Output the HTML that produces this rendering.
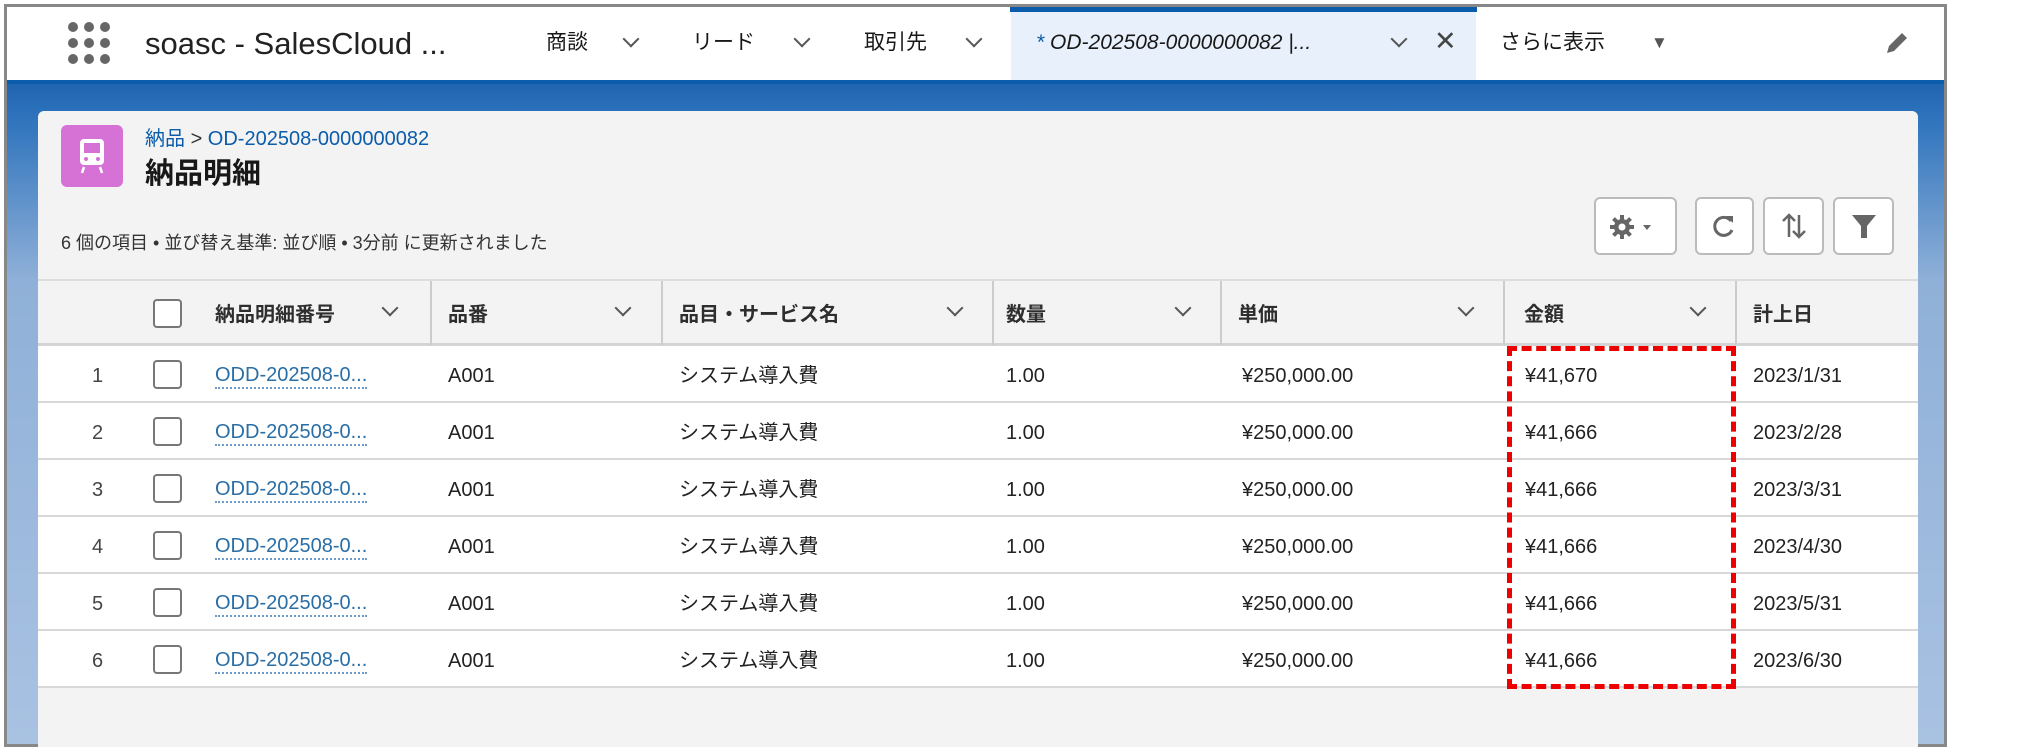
<!DOCTYPE html>
<html><head><meta charset="utf-8"><style>
*{margin:0;padding:0;box-sizing:border-box}
body{width:2027px;height:753px;background:#fff;position:relative;overflow:hidden;font-family:"Liberation Sans","Noto Sans CJK JP",sans-serif;color:#181818}
.a{position:absolute}
.t{position:absolute;white-space:nowrap;line-height:26px}
.hdr{font-weight:bold;font-size:20px;color:#2e2e2e}
.cell{font-size:20px;color:#222}
.chev{position:absolute;width:12px;height:12px;border-right:2px solid #555;border-bottom:2px solid #555;transform:rotate(45deg)}
.cb{position:absolute;width:29px;height:29px;border:2px solid #777;border-radius:4px;background:#fff}
.btn{position:absolute;border:2px solid #bbb;border-radius:6px;background:#fff;top:197px;height:58px}
</style></head><body>
<div class="a" style="left:4px;top:4px;width:1943px;height:743px;border:3px solid #888;background:#fff"></div>
<div class="a" style="left:7px;top:7px;width:1937px;height:73px;background:#fff"></div>
<svg class="a" style="left:66px;top:20px" width="46" height="46">
<g fill="#666"><circle cx="7" cy="7" r="5"/><circle cx="23" cy="7" r="5"/><circle cx="39" cy="7" r="5"/><circle cx="7" cy="23" r="5"/><circle cx="23" cy="23" r="5"/><circle cx="39" cy="23" r="5"/><circle cx="7" cy="39" r="5"/><circle cx="23" cy="39" r="5"/><circle cx="39" cy="39" r="5"/></g></svg>
<div class="t" style="left:145px;top:27px;font-size:31px;line-height:34px;color:#222">soasc - SalesCloud ...</div>
<div class="t" style="left:546px;top:30px;font-size:21px">商談</div><div class="chev" style="left:625px;top:33px"></div>
<div class="t" style="left:692px;top:30px;font-size:21px">リード</div><div class="chev" style="left:796px;top:33px"></div>
<div class="t" style="left:864px;top:30px;font-size:21px">取引先</div><div class="chev" style="left:968px;top:33px"></div>
<div class="a" style="left:1011px;top:7px;width:465px;height:73px;background:#e8f1fb"></div>
<div class="a" style="left:1010px;top:7px;width:467px;height:5px;background:#0b5cab"></div>
<div class="t" style="left:1036px;top:30px;font-size:21px;font-style:italic"><span style="color:#0b5cab">*</span> OD-202508-0000000082 |...</div>
<div class="chev" style="left:1393px;top:33px"></div>
<div class="t" style="left:1434px;top:28px;font-size:27px;color:#444">✕</div>
<div class="t" style="left:1500px;top:30px;font-size:21px">さらに表示</div>
<div class="t" style="left:1651px;top:30px;font-size:17px;color:#555">▼</div>
<svg class="a" style="left:1884px;top:30px" width="26" height="26"><path d="M3 23 L5 16 L18 3 L23 8 L10 21 Z" fill="#666"/></svg>
<div class="a" style="left:7px;top:80px;width:1937px;height:664px;background:linear-gradient(180deg,#1f63b0 0,#2f74bd 40px,#8fb0d8 200px,#a9c2e2 664px)"></div>
<div class="a" style="left:7px;top:80px;width:1937px;height:4px;background:#0b5cab"></div>
<div class="a" style="left:38px;top:111px;width:1880px;height:636px;background:#f3f3f3;border-radius:6px 6px 0 0"></div>
<div class="a" style="left:61px;top:125px;width:62px;height:62px;background:#d672d5;border-radius:6px"></div>
<svg class="a" style="left:74px;top:137px" width="36" height="40"><rect x="6" y="2" width="24" height="26" rx="4" fill="#fff"/><rect x="10" y="6" width="16" height="10" fill="#d672d5"/><circle cx="12" cy="22" r="2" fill="#d672d5"/><circle cx="24" cy="22" r="2" fill="#d672d5"/><path d="M10 30 L8 36 M26 30 L28 36" stroke="#fff" stroke-width="2.5"/></svg>
<div class="t" style="left:145px;top:126px;font-size:20px;color:#0b5cab">納品 <span style="color:#333">&gt;</span> OD-202508-0000000082</div>
<div class="t" style="left:145px;top:157px;font-size:29px;line-height:34px;font-weight:bold">納品明細</div>
<div class="t" style="left:61px;top:230px;font-size:18px;color:#333">6 個の項目 • 並び替え基準: 並び順 • 3分前 に更新されました</div>
<div class="btn" style="left:1594px;width:83px"></div>
<svg class="a" style="left:1609px;top:214px" width="54" height="26"><g transform="translate(13,13)" fill="#666"><circle r="8"/><g stroke="#666" stroke-width="4"><path d="M0 -12V12M-12 0H12M-8.5 -8.5L8.5 8.5M-8.5 8.5L8.5 -8.5"/></g><circle r="3.5" fill="#fff"/></g><path d="M34 11 L42 11 L38 16Z" fill="#666"/></svg>
<div class="btn" style="left:1695px;width:59px"></div>
<svg class="a" style="left:1711px;top:212px" width="28" height="28"><path d="M20 9 A9 9 0 1 0 21 18" fill="none" stroke="#666" stroke-width="3"/><path d="M15 4 L22 4 L22 11Z" fill="#666"/></svg>
<div class="btn" style="left:1763px;width:61px"></div>
<svg class="a" style="left:1780px;top:211px" width="28" height="30"><path d="M9 26 V4 M3 10 L9 4 L15 10 M19 4 V26 M13 20 L19 26 L25 20" fill="none" stroke="#666" stroke-width="2.5"/></svg>
<div class="btn" style="left:1833px;width:61px"></div>
<svg class="a" style="left:1850px;top:212px" width="28" height="28"><path d="M2 3 H26 L17 14 V26 L11 26 V14Z" fill="#666"/></svg>
<div class="a" style="left:38px;top:279px;width:1880px;height:67px;background:#f3f3f3;border-top:2px solid #ddd;border-bottom:3px solid #d4d4d4"></div>
<div class="a" style="left:38px;top:346px;width:1880px;height:342px;background:#fff"></div>
<div class="a" style="left:430px;top:281px;width:2px;height:64px;background:#ccc"></div>
<div class="a" style="left:661px;top:281px;width:2px;height:64px;background:#ccc"></div>
<div class="a" style="left:992px;top:281px;width:2px;height:64px;background:#ccc"></div>
<div class="a" style="left:1220px;top:281px;width:2px;height:64px;background:#ccc"></div>
<div class="a" style="left:1503px;top:281px;width:2px;height:64px;background:#ccc"></div>
<div class="a" style="left:1735px;top:281px;width:2px;height:64px;background:#ccc"></div>
<div class="cb" style="left:153px;top:299px"></div>
<div class="t hdr" style="left:215px;top:302px">納品明細番号</div><div class="chev" style="left:384px;top:302px"></div>
<div class="t hdr" style="left:448px;top:302px">品番</div><div class="chev" style="left:617px;top:302px"></div>
<div class="t hdr" style="left:679px;top:302px">品目・サービス名</div><div class="chev" style="left:949px;top:302px"></div>
<div class="t hdr" style="left:1006px;top:302px">数量</div><div class="chev" style="left:1177px;top:302px"></div>
<div class="t hdr" style="left:1238px;top:302px">単価</div><div class="chev" style="left:1460px;top:302px"></div>
<div class="t hdr" style="left:1524px;top:302px">金額</div><div class="chev" style="left:1692px;top:302px"></div>
<div class="t hdr" style="left:1753px;top:302px">計上日</div>
<div id="rows"></div>
<script>
var d=["2023/1/31","2023/2/28","2023/3/31","2023/4/30","2023/5/31","2023/6/30"],h="";
for(var i=0;i<6;i++){var y=346+57*i;
h+='<div class="a" style="left:38px;top:'+(y+55)+'px;width:1880px;height:2px;background:#d8d8d8"></div>';
var ty=y+17;
h+='<div class="t cell" style="left:92px;top:'+ty+'px;color:#444">'+(i+1)+'</div>';
h+='<div class="cb" style="left:153px;top:'+(y+14)+'px"></div>';
h+='<div class="t cell" style="left:215px;top:'+ty+'px;color:#2a6ea6;border-bottom:2px dotted #6b9bc8;line-height:24px">ODD-202508-0...</div>';
h+='<div class="t cell" style="left:448px;top:'+ty+'px">A001</div>';
h+='<div class="t cell" style="left:679px;top:'+ty+'px">システム導入費</div>';
h+='<div class="t cell" style="left:1006px;top:'+ty+'px">1.00</div>';
h+='<div class="t cell" style="left:1242px;top:'+ty+'px">¥250,000.00</div>';
h+='<div class="t cell" style="left:1525px;top:'+ty+'px">¥41,'+(i==0?'670':'666')+'</div>';
h+='<div class="t cell" style="left:1753px;top:'+ty+'px">'+d[i]+'</div>';}
document.getElementById('rows').innerHTML=h;
</script>
<div class="a" style="left:1507px;top:346px;width:229px;height:343px;border:5px dashed #e00"></div>
</body></html>
